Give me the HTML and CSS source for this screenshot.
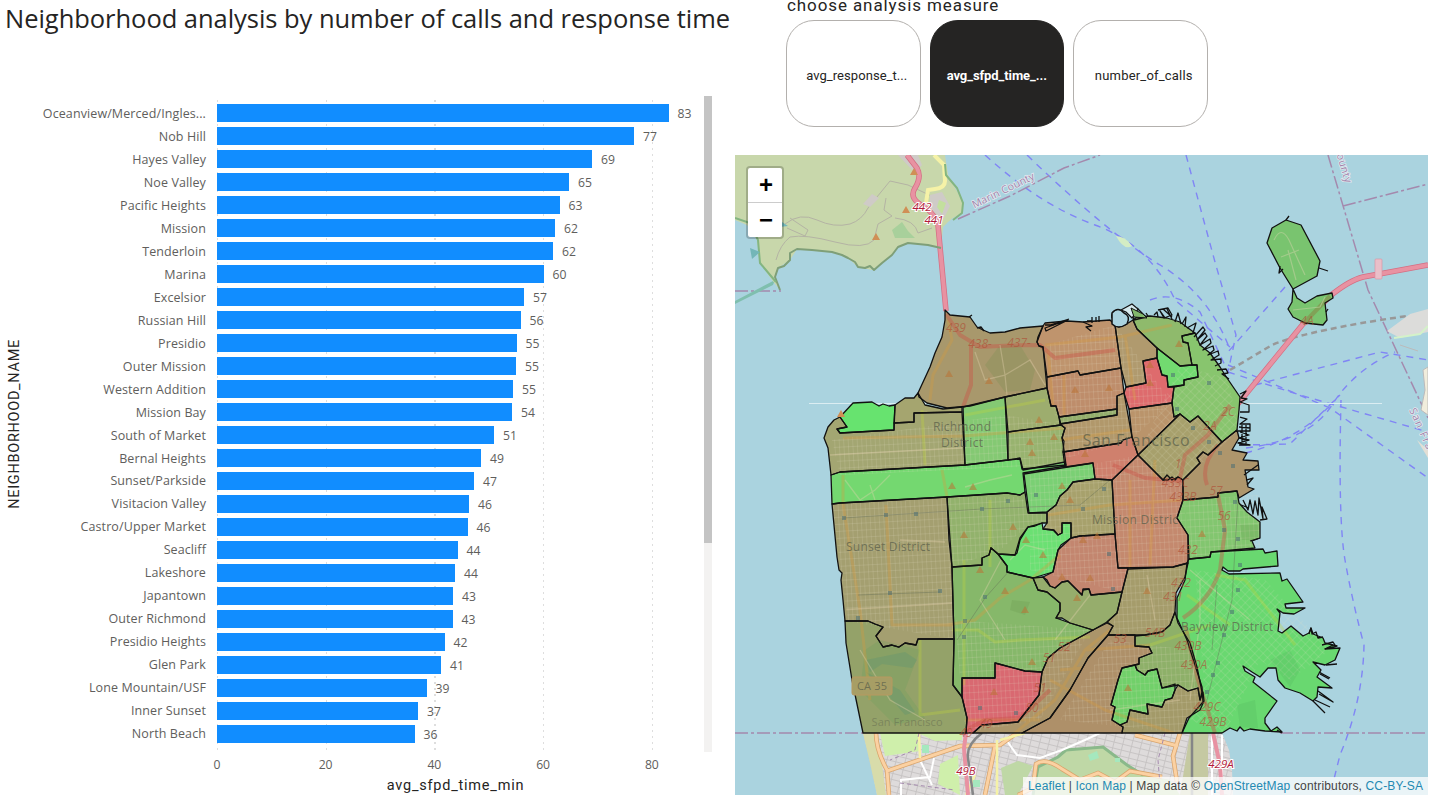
FILE: index.html
```html
<!DOCTYPE html>
<html lang="en">
<head>
<meta charset="utf-8">
<title>Neighborhood analysis</title>
<link rel="stylesheet" href="styles.css">
</head>
<body>
<main class="report">
<section class="left">
  <h1 class="title"><span>Neighborhood analysis by number of calls and response time</span></h1>
  <div class="chart">
    <div class="y-title"><span>NEIGHBORHOOD_NAME</span></div>
    <div class="plot">
      <div class="rows">
        <div class="row"><span class="name">Oceanview/Merced/Ingles...</span><i class="bar" style="width:451.5px"></i><span class="value">83</span></div>
        <div class="row"><span class="name">Nob Hill</span><i class="bar" style="width:417px"></i><span class="value">77</span></div>
        <div class="row"><span class="name">Hayes Valley</span><i class="bar" style="width:375px"></i><span class="value">69</span></div>
        <div class="row"><span class="name">Noe Valley</span><i class="bar" style="width:352px"></i><span class="value">65</span></div>
        <div class="row"><span class="name">Pacific Heights</span><i class="bar" style="width:342.5px"></i><span class="value">63</span></div>
        <div class="row"><span class="name">Mission</span><i class="bar" style="width:338px"></i><span class="value">62</span></div>
        <div class="row"><span class="name">Tenderloin</span><i class="bar" style="width:336px"></i><span class="value">62</span></div>
        <div class="row"><span class="name">Marina</span><i class="bar" style="width:326.5px"></i><span class="value">60</span></div>
        <div class="row"><span class="name">Excelsior</span><i class="bar" style="width:307px"></i><span class="value">57</span></div>
        <div class="row"><span class="name">Russian Hill</span><i class="bar" style="width:303.5px"></i><span class="value">56</span></div>
        <div class="row"><span class="name">Presidio</span><i class="bar" style="width:299.5px"></i><span class="value">55</span></div>
        <div class="row"><span class="name">Outer Mission</span><i class="bar" style="width:299px"></i><span class="value">55</span></div>
        <div class="row"><span class="name">Western Addition</span><i class="bar" style="width:296px"></i><span class="value">55</span></div>
        <div class="row"><span class="name">Mission Bay</span><i class="bar" style="width:295px"></i><span class="value">54</span></div>
        <div class="row"><span class="name">South of Market</span><i class="bar" style="width:277px"></i><span class="value">51</span></div>
        <div class="row"><span class="name">Bernal Heights</span><i class="bar" style="width:264px"></i><span class="value">49</span></div>
        <div class="row"><span class="name">Sunset/Parkside</span><i class="bar" style="width:257px"></i><span class="value">47</span></div>
        <div class="row"><span class="name">Visitacion Valley</span><i class="bar" style="width:252px"></i><span class="value">46</span></div>
        <div class="row"><span class="name">Castro/Upper Market</span><i class="bar" style="width:250.5px"></i><span class="value">46</span></div>
        <div class="row"><span class="name">Seacliff</span><i class="bar" style="width:240.5px"></i><span class="value">44</span></div>
        <div class="row"><span class="name">Lakeshore</span><i class="bar" style="width:238px"></i><span class="value">44</span></div>
        <div class="row"><span class="name">Japantown</span><i class="bar" style="width:236px"></i><span class="value">43</span></div>
        <div class="row"><span class="name">Outer Richmond</span><i class="bar" style="width:235.5px"></i><span class="value">43</span></div>
        <div class="row"><span class="name">Presidio Heights</span><i class="bar" style="width:227.5px"></i><span class="value">42</span></div>
        <div class="row"><span class="name">Glen Park</span><i class="bar" style="width:224px"></i><span class="value">41</span></div>
        <div class="row"><span class="name">Lone Mountain/USF</span><i class="bar" style="width:209.5px"></i><span class="value">39</span></div>
        <div class="row"><span class="name">Inner Sunset</span><i class="bar" style="width:201px"></i><span class="value">37</span></div>
        <div class="row"><span class="name">North Beach</span><i class="bar" style="width:197.5px"></i><span class="value">36</span></div>
      </div>
      <div class="ticks"><span>0</span><span>20</span><span>40</span><span>60</span><span>80</span></div>
      <div class="x-title"><span>avg_sfpd_time_min</span></div>
    </div>
    <div class="scroll"><div class="thumb"></div></div>
  </div>
</section>
<section class="right">
  <div class="slicer">
    <div class="slicer-title"><span>choose analysis measure</span></div>
    <div class="options">
      <button class="option"><span>avg_response_t...</span></button>
      <button class="option selected"><span>avg_sfpd_time_...</span></button>
      <button class="option"><span>number_of_calls</span></button>
    </div>
  </div>
  <div class="map">
    <svg class="tiles" width="693" height="640" viewBox="735 155 693 640">
      <defs>
        <pattern id="streets" width="4.5" height="7" patternUnits="userSpaceOnUse" patternTransform="rotate(-3)"><path d="M0 .5H4.5M.5 0V7" class="street"/></pattern>
        <pattern id="diag" width="6" height="6" patternUnits="userSpaceOnUse" patternTransform="rotate(44)"><path d="M0 .5H6M.5 0V6" class="street"/></pattern>
        <pattern id="blocks" width="9" height="6" patternUnits="userSpaceOnUse" patternTransform="rotate(14)"><path d="M0 .5H9M.5 0V6" class="block"/></pattern>
        <clipPath id="city"><path d="M945 310L977 327 1043 324 1110 320 1150 316 1195 333 1240 397 1259 465 1260 540 1300 600 1340 648 1282 733H863L832 504 824 438 853 403 918 393Z"/></clipPath>
      </defs>
      <rect class="water" x="735" y="155" width="693" height="640"/>

      <!-- ferry routes -->
      <g class="ferry">
        <path d="M985 155Q1040 205 1095 225T1175 300L1230 347"/>
        <path d="M1027 155Q1110 235 1160 265T1230 350"/>
        <path d="M1186 155L1215 262 1236 335 1228 372"/>
        <path d="M1150 300Q1175 290 1200 312L1228 372M1285 287L1228 352M1228 372L1300 395 1428 432"/>
        <path d="M1255 385L1380 352 1428 360M1246 448Q1310 440 1332 405T1395 352M1245 453Q1300 440 1335 400M1228 365L1330 408 1428 478M1240 445L1290 444 1340 395"/>
        <path d="M1341 400Q1338 520 1345 560T1364 645Q1363 700 1340 755L1330 795"/>
      </g>
      <path class="bart" d="M1230 370L1272 345Q1300 333 1380 320L1428 313"/>
      <g class="boundary">
        <path d="M735 291H781M958 219L1010 196 1064 168 1100 155M1328 155L1368 290 1428 418M1343 206L1428 184"/>
        <path d="M735 733H866M1280 733H1428"/>
      </g>
      <path class="seam" d="M809 403.500H1382"/>
      <path d="M735 301L775 280 773 285 735 304Z" fill="#7fbfae"/>

      <!-- Marin headlands -->
      <path class="marin" d="M735 155H945L948 175 958 193 963 203 962 213 953 218 948 222 943 227 941 248 928 245 908 243 898 247 892 255 882 263 872 270 858 267 848 258 832 252 812 250 797 249 790 260 778 268 775 277 780 290 772 280 760 263 757 240 747 225 735 220Z"/>
      <g fill="none" stroke="#b4b3a4" stroke-width="1">
        <path d="M785 224Q800 212 817 220T850 224Q862 220 868 208L890 181 908 185 940 200M886 198L884 210 892 216 878 224 874 240Q865 250 835 242T790 237Q780 245 776 260"/>
        <path d="M787 228L805 236 808 230 790 218M895 218Q915 220 918 233L932 228"/>
      </g>
      <path d="M898 155L915 173 922 165 918 155ZM930 195L942 192 950 206 944 218 930 220ZM863 204L872 194 879 198 870 207Z" fill="#cfcbc7"/>
      <path d="M892 230L902 222 908 231 915 238 895 238Z" fill="#a8d09b"/>
      <path d="M939 200L946 203 942 214 937 207Z" fill="#c3df9e"/>
      <path d="M934 155L944 165 945 181Q945 188 935 189L928 190 926 203" class="yellow wide"/>
      <path class="trunk-case" d="M907 155L917 168Q922 177 915 188T925 207Q937 217 938 225L946 311"/>
      <path class="trunk" d="M907 155L917 168Q922 177 915 188T925 207Q937 217 938 225L946 311"/>
      <path class="coast" d="M941 248L928 245 908 243 898 247 892 255 882 263 874 270 870 266 865 268 858 267 855 262 848 258 842 255 832 252 812 250 797 249 790 253 790 260 784 266 778 268 775 277 780 290"/>
      <path d="M735 218L750 223 758 240 760 263 776 282M953 220L962 213 963 203 957 188 946 175 945 164" fill="none" stroke="#83b581" stroke-width="2"/>
      <path d="M750 248L760 252 752 259ZM782 222L788 226 780 227Z" fill="#73b6b8"/>
      <path d="M1116 236Q1125 236 1132 246 1124 251 1116 236Z" fill="#d4edc4"/>

      <!-- Bay Bridge and Oakland shore -->
      <path class="trunk-case" d="M1237 405L1303 324 1330 296Q1350 280 1363 277L1428 265"/>
      <path class="trunk" d="M1237 405L1303 324 1330 296Q1350 280 1363 277L1428 265"/>
      <rect x="1375" y="259" width="7" height="20" rx="1" fill="#e9bfc9" stroke="#db8fa0" stroke-width=".6"/>
      <path d="M1387 331L1410 314 1428 309V332L1400 338Z" fill="#dcdcda"/>
      <path d="M1394 338L1420 334 1428 326" fill="none" stroke="#d4f2c9" stroke-width="2"/>
      <path d="M1400 345L1418 351" stroke="#bbb" stroke-width="1"/>
      <path d="M1428 367L1423 370 1425 390 1421 410 1428 415Z" fill="#f1eddc" stroke="#bbb"/>
      <path d="M1417 440L1428 450V458Z" fill="#e3dfd5"/>

      <!-- Daly City and San Bruno Mountain -->
      <path d="M863 733H1222L1229 750 1232 770 1233 795H877L871 763Z" fill="#dedbdb"/>
      <path d="M863 733H1222L1229 750 1232 770 1233 795H877Z" fill="url(#blocks)"/>
      <path d="M863 733H878L886 795H877L870 763Z" fill="#d8dcaa"/>
      <path d="M880 733H918L920 751 885 756ZM918 733H962V740L935 741ZM940 764L958 755 960 795 938 784Z" fill="#cfefab"/>
      <path d="M1033 795L1038 767 1058 757 1066 750 1103 747 1127 765 1143 775 1170 780 1180 795ZM1001 768L1018 761 1033 766 1018 795H1005Z" fill="#bfd8a6"/>
      <path d="M1190 733H1208V795H1180Z" fill="#c5c9a2"/>
      <path d="M1033 795L1038 767 1058 757 1066 750 1103 747 1127 765 1143 775" fill="none" stroke="#8ab98a" stroke-width="3"/>
      <path class="white-road" d="M1007 741L1017 755 1040 758 1062 750 1085 740 1100 733M901 795V780L930 777 934 758M920 760L932 785M1212 733V795M1222 735V780"/>
      <path class="orange-case" d="M876 733Q876 750 887 770L889 795M887 771L960 746 1000 745 1035 720M995 746L985 795M1135 735L1178 746M1180 733L1173 756 1177 782M1018 795L1033 788 1036 764Q1045 757 1062 769L1080 780 1098 773 1115 782 1130 771 1162 777"/>
      <path class="orange" d="M876 733Q876 750 887 770L889 795M887 771L960 746 1000 745 1035 720M995 746L985 795M1135 735L1178 746M1180 733L1173 756 1177 782M1018 795L1033 788 1036 764Q1045 757 1062 769L1080 780 1098 773 1115 782 1130 771 1162 777"/>
      <path class="yellow" d="M919 733L920 758M997 740V795M966 795L975 775M1000 740L1025 733"/>
      <path d="M966 733L964 748 968 795M1213 733L1220 765 1222 795" class="trunk"/>
      <path d="M982 733Q966 745 968 758L973 795M1192 733V795" fill="none" stroke="#858687" stroke-width="2.500"/>
      <path d="M919 733L915 750 890 760M900 783L955 790M1165 733L1158 760 1160 785" class="boundary dotted"/>
      <g fill="#a5e8be"><path d="M922 745h7v8h-7zM973 780h7v7h-7zM1088 755l9-4 2 7-9 3zM1115 758h5v4h-5z"/></g>

      <!-- neighbourhood areas -->
      <g id="areas">
        <path fill="#a8986c" d="M945 310L950 315 970 317 977 327 983 330 990 333 1005 332 1020 328 1043 326 1037 342 1039 346 1043 347 1047 388 1005 397 970 406 947 408 927 403 919 397 918 393 930 367 935 353 942 337 945 320Z"/>
        <path fill="#bf946d" d="M1043 326L1045 323 1067 321 1083 322 1110 320 1115 325 1121 368 1080 375 1078 371 1047 377 1043 347 1039 346 1037 342 1038 337Z"/>
        <path fill="#be8d6b" d="M1047 377L1078 371 1080 375 1121 368 1124 393 1117 396V409L1059 417 1056 406H1051L1047 388Z"/>
        <path fill="#9dad6e" d="M1005 397L1047 388 1051 406H1056L1059 417 1061 425 1008 432Z"/>
        <path fill="#98b36f" d="M1008 432L1061 425 1065 428 1062 438 1064 450 1066 465 1022 469 1020 459 1008 460Z"/>
        <path fill="#94ae6c" d="M1059 417L1117 409V415L1060 424Z"/>
        <path fill="#b1986b" d="M1060 424L1117 415V396L1124 393 1132 437 1123 440 1121 443 1063 452 1064 441 1062 438 1065 428Z"/>
        <path fill="#cf806d" d="M1063 452L1121 443 1123 440 1132 437 1138 455 1112 480 1095 479 1093 463 1065 467Z"/>
        <path fill="#84c973" d="M963 407L1005 397 1008 460 965 465Z"/>
        <path fill="#a5a56f" d="M895 405L905 398 914 398 918 393 925 405 943 409 962 407V412L914 413V422L894 423Z"/>
        <path fill="#a3a672" d="M894 423L914 422V413L962 412 965 465 840 472 831 475 828 448 824 438 828 427 834 420 840 417 847 427 837 429 840 433 894 430Z"/>
        <path fill="#67e36f" d="M840 417L853 403 872 402 879 406 883 404 889 406 895 405 894 430 840 433 837 429 847 427Z"/>
        <path fill="#74d870" d="M831 475L840 472 965 465 1008 460 1020 458 1023 470 1065 462 1066 466 1023 473 1025 492 1020 495 1007 493 947 497 840 503 832 504Z"/>
        <path fill="#7ad074" d="M1024 474L1093 463 1095 479 1073 482 1067 490 1060 496 1056 505 1047 512 1029 513Z"/>
        <path fill="#a49f70" d="M832 504L840 503 947 497 949 540 952 567 954 639H918L916 645 905 643 899 647 892 645 883 647 876 636 883 627 875 624 868 621H845L843 600 841 580 842 573 839 570 837 557Z"/>
        <path fill="#94a269" d="M845 621H868L875 624 883 627 876 636 883 647 892 645 899 647 905 643 916 645 918 639H954L953 685 962 697 967 718 966 733H863L852 680 846 643Z"/>
        <path fill="#92b26c" d="M947 497L1007 493 1020 495 1025 492 1028 513H1047V523L1042 523 1035 526 1028 527 1020 540 1017 553 1015 555 998 554 991 548 989 555 982 558V565L952 567Z"/>
        <path fill="#6be073" d="M991 548L998 554 1015 555 1020 538 1028 527 1042 523 1043 529 1053 530 1058 535 1062 533V523H1071V538L1061 545 1058 550 1053 572 1033 578 1020 575 1007 572V566L998 554Z"/>
        <path fill="#a7a16c" d="M1073 482L1095 479 1112 480 1115 534 1080 536 1071 538V523H1062V533L1058 535 1054 530 1043 529 1047 523V512L1056 505 1060 496 1067 490Z"/>
        <path fill="#c3866f" d="M1071 538L1080 536 1115 534 1118 568H1128L1122 592 1091 595 1089 589H1083L1082 595 1068 581 1062 582 1055 588 1050 586 1047 580 1043 577 1053 572 1058 550Z"/>
        <path fill="#c4896e" d="M1112 480L1138 455 1163 480 1167 475 1172 480 1178 477 1183 480V500L1177 518 1188 535V563L1173 567 1118 568 1115 534Z"/>
        <path fill="#96ad6c" d="M1033 578L1043 577 1050 586 1055 588 1062 582 1068 581 1082 595 1083 590 1089 589 1091 595 1122 592 1117 613 1107 622 1093 630 1070 623 1062 618 1056 618 1060 611V603L1047 592 1038 590Z"/>
        <path fill="#86b86a" d="M952 567L982 565V558L989 555 991 548 998 554 1007 566V572L1020 575 1033 578 1038 590 1047 592 1060 603V611L1056 618 1070 623 1093 630 1060 648 1048 658 1042 672 1025 671 995 663V678H962V697L953 685 954 639Z"/>
        <path fill="#d96971" d="M962 678H995V663L1025 671 1042 672 1039 695 1018 722 982 725 973 733H966L967 718 962 697Z"/>
        <path fill="#ab956a" d="M1042 672L1048 658 1060 648 1093 630 1107 623 1113 626 1108 635 1088 658 1070 690 1050 718 1022 733H973L982 725 1018 722 1039 695Z"/>
        <path fill="#ae9069" d="M1108 635H1135V646L1149 647 1152 653 1139 658V664L1122 668 1118 680 1111 705 1115 707 1112 720 1123 727 1122 733H1022L1050 718 1070 690 1088 658Z"/>
        <path fill="#71d06a" d="M1122 668L1135 665 1137 670 1145 675 1148 671 1157 669 1162 688 1175 684V690L1172 698 1165 700 1162 707 1147 704 1148 714 1130 710 1127 722 1120 725 1112 720 1115 707 1111 705 1118 680Z"/>
        <path fill="#8eb069" d="M1135 636L1145 635 1162 632 1170 625 1175 612 1178 623 1190 643 1197 667 1202 692 1200 700 1198 688 1188 691 1178 685 1162 688 1157 669 1148 671 1145 675 1137 670 1135 665 1139 664V658L1152 653 1149 647 1135 646Z"/>
        <path fill="#a39a69" d="M1175 690L1178 685 1188 691 1198 688 1200 700 1203 692 1204 701 1200 710 1187 718 1182 733H1122L1123 727 1120 725 1127 722 1130 710 1148 714 1147 704 1162 707 1165 700 1172 698Z"/>
        <path fill="#a59c6b" d="M1128 569L1173 567 1188 563 1185 577 1176 593 1175 612 1170 625 1162 632 1145 635H1108L1113 626 1107 622 1117 613 1122 592Z"/>
        <path fill="#69d870" d="M1189 559L1210 557 1211 552 1263 549 1265 553 1277 551 1278 566 1243 569 1240 571 1228 571 1223 567 1222 570 1229 574 1280 573 1282 581 1287 579 1303 602 1285 604 1286 608 1305 608 1294 614 1283 613 1277 609 1280 613 1278 631 1282 633 1291 626 1303 636 1309 633 1311 628 1313 634 1323 638 1325 643 1337 646 1325 649 1340 648 1335 660 1325 665 1313 662 1321 670 1317 677 1332 688 1318 687 1317 697 1313 701 1300 693 1285 688 1278 680 1276 668 1268 668 1260 677 1252 672 1243 666 1245 671 1255 677 1253 682 1277 701 1265 718 1265 723 1271 731 1277 727 1282 732 1265 731 1250 729 1244 731 1240 727 1237 731 1230 728 1222 733H1182L1189 718 1203 702 1202 687 1187 640 1177 618V598L1185 580 1187 563Z"/>
        <path fill="#82c66f" d="M1183 500L1218 497V493L1237 491 1239 503 1247 512 1260 522V538L1252 541 1255 548 1211 552 1210 557 1189 559 1188 535 1177 518Z"/>
        <path fill="#ae966c" d="M1183 480L1200 463 1197 458 1203 452 1208 455 1222 442 1237 430 1239 438 1232 450 1247 453 1243 460 1258 461 1259 470 1245 470 1248 487 1254 489 1239 498 1237 491 1218 493V497L1183 500Z"/>
        <path fill="#a7a06c" d="M1138 455L1180 414 1190 422 1198 416 1222 442 1208 455 1203 452 1197 458 1200 463 1183 480 1178 477 1175 480 1172 477 1168 480 1163 480Z"/>
        <path fill="#ba946b" d="M1129 409L1172 403 1174 417 1180 414 1138 455 1132 437Z"/>
        <path fill="#de6b6d" d="M1126 387L1146 383 1143 361 1157 358 1162 375 1167 376 1168 387H1174L1172 403 1129 409 1124 393Z"/>
        <path fill="#b09a6e" d="M1115 325L1119 327 1125 325 1133 320 1137 329 1157 348V358L1143 361 1146 383 1126 387 1121 368Z"/>
        <path fill="#8fba6c" d="M1133 320L1137 317 1150 316 1167 318 1180 322 1188 328 1195 333 1182 336 1183 342 1188 343 1192 365 1180 366 1157 348 1137 329Z"/>
        <path fill="#72da70" d="M1157 348L1180 366 1192 365H1197L1198 377 1184 380V385L1168 387 1167 376 1162 375 1157 358Z"/>
        <path fill="#88c56e" d="M1195 333L1200 345 1210 353 1220 367 1227 378 1240 397 1239 410 1237 430 1222 442 1198 416 1190 422 1180 414 1174 417 1172 403 1174 387 1184 385V380L1198 377 1197 365H1192L1188 343 1183 342 1182 336Z"/>
        <path fill="#79c46f" d="M1286 220L1301 225 1320 261 1317 276 1293 289 1280 268 1267 243 1272 228Z"/>
        <path fill="#79c46f" d="M1293 289L1297 298 1305 303 1317 296 1332 293 1333 298 1325 303 1327 320 1323 325 1305 323 1293 317 1288 309 1292 302Z"/>
      </g>

      <g clip-path="url(#city)">
        <path d="M832 440L1005 415 1065 425V465L840 475ZM832 504L947 497 954 639 845 621ZM947 497H1020L1040 515 1000 550 952 567ZM1047 345L1115 325 1172 403 1130 440 1060 460ZM1030 475L1115 460 1138 455 1183 480 1188 560 1122 592 1030 570ZM1185 500L1260 495V550L1190 557ZM1128 569L1183 565 1175 625 1110 635ZM955 620L1090 630 1040 720 965 733ZM1060 720L1110 640 1190 650 1200 700 1180 733Z" fill="url(#streets)"/>
        <path d="M1180 366L1227 378 1240 430 1183 480 1138 455ZM1195 570L1265 580 1330 650 1290 680 1260 660 1225 733 1190 720 1205 700Z" fill="url(#diag)"/>
        <path d="M865 650L880 640 920 650 905 690 925 718 895 725 860 690ZM1270 660L1290 650 1300 670 1290 687ZM1237 705L1255 700 1258 728 1240 727Z" fill="#3f9d4b" fill-opacity=".14"/>
        <path d="M866 660L905 652 917 660 912 668 882 664 870 672ZM866 672L885 682 900 690 915 712 905 715 888 695Z" fill="#4b8f78" fill-opacity=".25"/>
        <path d="M985 365L1000 345 1020 345 1035 370 1030 390 1005 392ZM1012 600L1030 602 1025 615 1010 610ZM1240 525H1258V540H1242Z" fill="#5f8d42" fill-opacity=".18"/>
        <g class="arterial gold">
          <path d="M948 320L952 340 933 375 930 400M843 438L963 436 1065 428M843 475V504L860 610 870 700M886 505L892 625 954 625M947 625L975 620 1000 598 1030 580 1060 555"/>
          <path d="M942 470L947 497M1048 350L1053 405M1064 375V415M1045 345L1120 337 1172 325M1125 335L1135 400M1060 440L1130 430M1048 515L1110 505 1183 500M1130 480V567M1155 460L1150 565"/>
          <path d="M1050 680L1105 710 1180 735M1110 630L1085 650 1055 700 1015 733M1085 650L1150 645M1060 670L1083 668M965 720H1040"/>
        </g>
        <g class="arterial lime">
          <path d="M922 410L925 465M965 415L1045 400M990 500V567M952 630H978L995 642 1020 640 1090 637M964 560V685M920 640V715L960 710M1150 645L1210 625M1187 595L1230 625M1215 575L1245 580 1295 645"/>
        </g>
        <path class="arterial red" d="M946 314L960 335 980 347Q1010 345 1040 345L1055 358 1115 350M971 345V385L963 407M1113 465L1145 478 1183 481M1180 478L1185 455 1208 435 1230 405M1207 485Q1200 465 1218 445M1218 495L1225 530 1220 570Q1210 600 1183 618M1185 625L1198 680 1215 733M966 730L985 720 1020 718 1050 690"/>
        <g fill="none" stroke="#e7d3b2" stroke-opacity=".35" stroke-width="1.300">
          <path d="M845 480L860 500 875 490 890 475M870 485L875 500M965 487L990 480 1012 475M975 352L985 380 1005 375 1007 395M1000 345L1005 375 1030 360 1045 385M1001 560L980 600 1005 640M900 540L945 542M840 610L954 603M860 650L890 700 925 720M1110 710L1180 700M1190 570L1250 620M1090 595L1055 640M830 455L962 448M1010 560L1025 545 1045 550M1147 575L1155 620M1200 580V620L1190 700"/>
        </g>
        <path class="rail" d="M843 518L982 509 1080 505 1110 480M858 595L940 592M957 640L985 598 1010 570M1238 498L1232 600 1207 700M1217 585L1212 650"/>
        <g class="station"><path d="M842 516h4v4h-4zM884 513h4v4h-4zM914 512h4v4h-4zM980 507h4v4h-4zM1006 499h4v4h-4zM1034 493h4v4h-4zM1081 507h4v4h-4zM1102 487h4v4h-4zM888 591h4v4h-4zM938 589h4v4h-4zM856 616h4v4h-4zM963 619h4v4h-4zM962 635h4v4h-4zM983 595h4v4h-4zM978 706h4v4h-4zM1014 711h4v4h-4zM1171 373h4v4h-4zM1207 381h4v4h-4zM1191 426h4v4h-4zM1207 440h4v4h-4zM1218 451h4v4h-4zM1231 464h4v4h-4zM1175 407h4v4h-4zM1233 500h4v4h-4zM1222 528h4v4h-4zM1236 537h4v4h-4zM1238 563h4v4h-4zM1236 588h4v4h-4zM1230 610h4v4h-4zM1222 633h4v4h-4zM1216 661h4v4h-4zM1211 673h4v4h-4zM1205 690h4v4h-4zM1107 552h4v4h-4zM1111 587h4v4h-4z"/></g>
      </g>
      <path class="trunk-on" d="M1303 324L1330 296"/>
      <path d="M1274 240Q1281 225 1289 240L1299 262 1305 275M1281 257L1299 250M1288 250L1296 280M1293 310L1320 307 1325 297" fill="none" stroke="#b3cf95" stroke-width="1.200" stroke-opacity=".7"/>

      <use href="#areas" class="outlines"/>

      <!-- piers and breakwaters -->
      <g class="piers">
        <path d="M969 317L972 315M977 328L981 327 984 331M1045 328L1068 320 1046 331ZM1050 325L1069 319M1083 322L1092 326 1086 327 1091 331M1092 323V317M1096 322V317M1099 322V316M1045 325L1054 325M1087 321L1092 321"/>
        <path d="M1112 318Q1111 311 1118 310M1131 311L1134 320 1146 317 1137 308M1148 316L1146 313M1154 315L1157 312 1158 317M1158 310L1168 308 1172 315 1164 318 1160 311 1165 318M1163 309L1172 317M1167 309L1172 319"/>
        <path d="M1175 322L1178 313 1181 324M1182 324L1186 317 1185 327M1187 328L1196 323 1193 333M1194 337L1203 327 1205 330 1197 340 1205 333 1207 336 1200 345 1210 339 1211 343 1203 350 1213 346 1214 350 1208 355 1218 351 1219 355 1211 360 1221 359 1221 363 1215 366M1217 370L1226 369 1228 373 1222 374 1229 379"/>
        <path d="M1240 394L1246 391 1241 398 1247 399 1240 402 1249 405V412H1240M1240 417L1247 419 1240 424H1250V431H1238M1239 427L1250 428M1240 432L1249 435 1239 438 1249 440 1238 443 1250 445H1239M1242 425V444M1246 425V444"/>
        <path d="M1244 475L1258 465M1246 480L1253 478 1247 485M1243 500L1248 510 1250 500 1253 514 1255 501 1258 515 1259 498 1263 519 1262 507 1267 519 1260 520M1241 505L1249 508M1250 541L1260 538"/>
        <path d="M1309 634L1311 628 1312 634 1316 632 1318 638 1323 637M1322 645L1333 642 1335 645M1325 649L1333 645M1326 665L1337 664M1319 672L1330 678M1320 674L1329 679M1318 691L1333 702 1319 694M1313 701L1325 713M1315 700L1330 707"/>
        <path d="M1286 220L1289 216M1319 268L1328 271M1280 266L1279 273 1283 269M1326 312L1328 309M1277 730L1282 733"/>
      </g>
      <path d="M1112 313Q1118 306 1124 313 1131 316 1127 324 1118 330 1112 324Z" fill="#aad3df" stroke="#111" stroke-width="1.500"/>
      <path d="M1121 310L1132 304 1138 309 1132 318 1126 312Z" fill="#d5e9ed" stroke="#111" stroke-width="1.200"/>
      <path d="M1131 308L1143 314 1147 318 1134 317Z" fill="#82b86c" stroke="#111"/>

      <g class="peaks"><path d="M949 370l4 7h-8zM989 377l4 7h-8zM1075 386l4 7h-8zM1109 384l4 7h-8zM1039 416l4 7h-8zM1030 438l4 7h-8zM1054 433l4 7h-8zM1032 449l4 7h-8zM1085 450l4 7h-8zM1150 361l4 7h-8zM1150 379l4 7h-8zM1179 340l4 7h-8zM964 531l4 7h-8zM1013 523l4 7h-8zM952 482l4 7h-8zM973 483l4 7h-8zM1026 536l4 7h-8zM1043 551l4 7h-8zM1070 496l4 7h-8zM1083 536l4 7h-8zM1097 532l4 7h-8zM1062 573l4 7h-8zM1090 574l4 7h-8zM1147 587l4 7h-8zM1077 594l4 7h-8zM980 566l4 7h-8zM1005 587l4 7h-8zM1025 606l4 7h-8zM1032 658l4 7h-8zM994 688l4 7h-8zM1128 684l4 7h-8zM1202 530l4 7h-8zM1062 482l4 7h-8z"/><path class="vivid" d="M841 410l4 7h-8zM914 168l4 7h-8zM906 206l4 7h-8zM876 233l4 7h-8z"/></g>

      <g class="exits">
        <text x="956" y="332">439</text><text x="980" y="348">438-</text><text x="1019" y="347">437-</text>
        <text x="1175" y="487">433C</text><text x="1183" y="501">433B</text><text x="1216" y="495">57</text><text x="1224" y="520">56</text><text x="1178" y="468">1</text>
        <text x="1210" y="430">2A</text><text x="1228" y="416">2C</text><text x="1188" y="554">432</text><text x="1181" y="587">432</text><text x="1173" y="601">431</text>
        <text x="1155" y="637">54B</text><text x="1188" y="650">430B</text><text x="1194" y="669">430A</text><text x="1207" y="711">429C</text><text x="1213" y="726">429B</text>
        <text x="1120" y="643">53</text><text x="1064" y="651">52</text><text x="1049" y="662">51</text><text x="1040" y="692">51</text><text x="1032" y="712">50</text><text x="986" y="728">49</text><text x="966" y="737">49</text><text x="1307" y="325">4A</text>
      </g>
      <g class="exits strong"><text x="922" y="211">442</text><text x="934" y="224">441</text><text x="966" y="775">49B</text><text x="1221" y="768">429A</text></g>
      <rect class="shield" x="852" y="677" width="40" height="18" rx="2"/>
      <g class="places">
        <text x="962" y="431" textLength="58">Richmond</text><text x="962" y="447" textLength="42">District</text>
        <text x="1136" y="446" class="large" textLength="107">San Francisco</text>
        <text x="1135" y="524" textLength="86">Mission Distric</text><text x="888" y="551" textLength="84">Sunset District</text><text x="1227" y="631" textLength="92">Bayview District</text>
        <text x="872" y="690" class="small" textLength="30">CA 35</text><text x="907" y="726" class="faint" textLength="71">San Francisco</text>
      </g>
      <g class="county"><text x="1003" y="194" transform="rotate(-26 1003 190)" textLength="68">Marin County</text><text x="1341" y="169" transform="rotate(73 1341 169)" textLength="30">ounty</text><text x="1418" y="430" transform="rotate(66 1418 430)" textLength="44">San Fra</text></g>
    </svg>
    <div class="zoom-control"><button class="zoom-button">+</button><button class="zoom-button">−</button></div>
    <div class="attribution"><span><a>Leaflet</a> | <a>Icon Map</a> | Map data © <a>OpenStreetMap</a> contributors, <a>CC-BY-SA</a></span></div>
  </div>
</section>
</main>
</body>
</html>
```

FILE: styles.css
```css
* { box-sizing: border-box; }
body { margin: 0; background: #fff; font-family: "Open Sans", "Noto Sans", sans-serif; color: #252423; }
.report { display: grid; grid-template-columns: 735px 693px; width: 1435px; height: 800px; overflow: hidden; }
.left { display: flex; flex-direction: column; min-width: 0; }
.title { margin: 0; height: 96px; padding: 0 0 0 5px; font-size: 25.5px; line-height: 36px; font-weight: 400; white-space: nowrap; letter-spacing: -.04px; }
.chart { display: flex; height: 704px; }
.y-title { width: 28px; height: 656px; display: flex; align-items: center; justify-content: center; font-family: Roboto, sans-serif; font-size: 14.5px; letter-spacing: .7px; }
.y-title span { writing-mode: vertical-rl; transform: rotate(180deg); white-space: nowrap; }
.plot { width: 676px; }
.rows {
  height: 656px; padding-top: 6px;
  background:
    repeating-linear-gradient(#fff 0 4px, transparent 4px 6px) 0 0 / 100% 100%,
    repeating-linear-gradient(90deg, #dedede 0 1px, transparent 1px 108.75px) 188.5px 0 / 487.5px 100% no-repeat;
}
.row { display: flex; align-items: center; height: 22.97px; font-size: 12.5px; letter-spacing: .1px; color: #605e5c; white-space: nowrap; }
.name { width: 178px; margin-right: 11px; text-align: right; }
.bar { display: block; height: 18px; background: #118dff; }
.value { margin-left: 9px; padding-top: 1px; font-size: 12.2px; }
.ticks { display: grid; grid-template-columns: repeat(5, 108.75px); margin-left: 134.5px; height: 26px; font-size: 12.2px; line-height: 26px; text-align: center; color: #605e5c; }
.x-title { padding-left: 190px; width: 665px; line-height: 16px; text-align: center; font-family: Roboto, sans-serif; font-size: 14.5px; }
.x-title span { letter-spacing: .78px; }
.scroll { width: 8px; height: 656px; background: #f3f2f1; }
.thumb { height: 447px; background: #c4c4c4; }
.right { display: flex; flex-direction: column; width: 693px; }
.slicer { height: 155px; padding-left: 51px; font-family: Roboto, sans-serif; }
.slicer-title { height: 20px; line-height: 20px; margin-top: -5px; margin-bottom: 5px; padding-left: 1px; font-size: 17px; letter-spacing: .9px; }
.options { display: flex; gap: 9px; }
.option { width: 134.500px; height: 107px; padding: 4px 0 0 7px; border: 1px solid #b3b0ad; border-radius: 28px; background: #fff; color: #252423; font: 13px Roboto, sans-serif; letter-spacing: .2px; }
.option:first-child { letter-spacing: .06px; }
.selected { background: #252423; border-color: #252423; color: #fff; font-weight: 700; padding-left: 0; letter-spacing: -.08px; }
.map { position: relative; width: 693px; height: 640px; overflow: hidden; }
.tiles { display: block; }
.zoom-control { position: absolute; left: 11px; top: 11px; width: 38px; height: 73px; border: 2px solid rgba(0,0,0,.2); border-radius: 4px; background: #fff; background-clip: padding-box; }
.zoom-button { display: block; width: 34px; height: 35px; padding: 0 0 0 2px; border: 0; border-bottom: 1px solid #ccc; background: transparent; font: bold 24px/34px "Liberation Sans", sans-serif; color: #000; }
.zoom-button:last-child { height: 33px; border-bottom: 0; line-height: 32px; }
.attribution { position: absolute; right: 0; bottom: 0; width: 405px; height: 18px; padding: 0 5px; background: rgba(255,255,255,.75); font: 12px/18px "Liberation Sans", sans-serif; letter-spacing: .16px; color: #444; white-space: nowrap; }
.attribution a { color: #2389b2; }
.water { fill: #aad3df; }
.ferry { fill: none; stroke: #8085f5; stroke-width: 1.4; stroke-dasharray: 7 6; }
.bart { fill: none; stroke: #989898; stroke-width: 2.500; stroke-dasharray: 6 4; }
.boundary { fill: none; stroke: #a489ad; stroke-width: 1.5; stroke-dasharray: 13 3 3 3; }
.dotted { stroke-dasharray: 4 3; stroke-width: 1; }
.seam { fill: none; stroke: #dbedf2; }
.marin { fill: #c8d7ab; }
.coast { fill: none; stroke: #7f9f78; stroke-width: 2; stroke-linejoin: round; }
.trunk-case { fill: none; stroke: #d56e83; stroke-width: 5.5; }
.trunk { fill: none; stroke: #e892a2; stroke-width: 4; }
.trunk-on { fill: none; stroke: #87803f; stroke-width: 4; stroke-opacity: .5; }
.yellow { fill: none; stroke: #f5f2a7; stroke-width: 2.5; }
.wide { stroke-width: 4; }
.orange-case { fill: none; stroke: #d9a46b; stroke-width: 4.5; }
.orange { fill: none; stroke: #fbd1a2; stroke-width: 3; }
.white-road { fill: none; stroke: #fff; stroke-width: 2; }
.street { fill: none; stroke: #e2dec4; stroke-opacity: .2; stroke-width: .8; }
.block { fill: none; stroke: #c5c2c2; stroke-width: .9; }
.arterial { fill: none; stroke-opacity: .33; stroke-width: 3; stroke-linejoin: round; }
.gold { stroke: #d99c3e; }
.lime { stroke: #c0d33c; }
.red { stroke: #cb5046; stroke-width: 4; stroke-opacity: .4; }
.rail { fill: none; stroke: #616b55; stroke-opacity: .4; stroke-width: 1; }
.station { fill: #4c6f75; fill-opacity: .55; }
.outlines { fill-opacity: 0; stroke: #111; stroke-width: 1.3; stroke-linejoin: round; }
.piers { fill: none; stroke: #111; stroke-width: 1.3; stroke-linejoin: round; }
.peaks { fill: #b97234; fill-opacity: .55; }
.vivid { fill: #d08f55; fill-opacity: 1; }
.exits { font: italic 12px "Open Sans", sans-serif; fill: #ae4f36; fill-opacity: .65; text-anchor: middle; }
.strong { fill: #b21c3b; fill-opacity: 1; stroke: #fff; stroke-width: 2px; paint-order: stroke; font-weight: 500; font-size: 11.5px; }
.shield { fill: #a79e65; stroke: #b79961; }
.places { font: 12px "Open Sans", sans-serif; fill: #5b604b; fill-opacity: .75; text-anchor: middle; }
.large { font-size: 16px; }
.small { font-size: 11px; }
.faint { font-size: 11px; fill-opacity: .45; }
.county { font: 10.5px "Open Sans", sans-serif; fill: #a083aa; stroke: #e5eaf0; stroke-width: 1.5px; paint-order: stroke; text-anchor: middle; }
```
